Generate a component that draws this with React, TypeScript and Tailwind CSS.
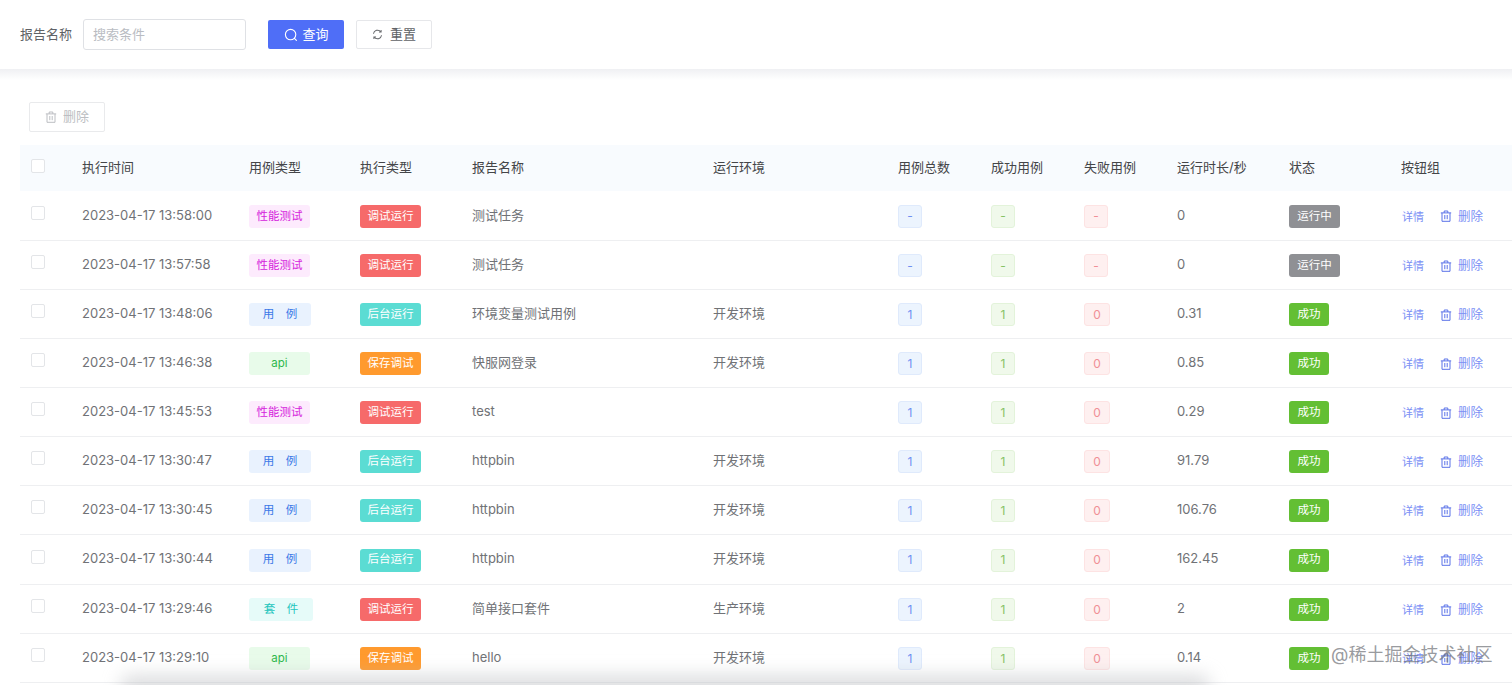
import React from 'react';

const FONT = "font-['Inter','Noto_Sans_CJK_SC',sans-serif]";

function SearchIcon() {
  return (
    <svg width="14" height="14" viewBox="0 0 14 14" fill="none" stroke="currentColor" strokeWidth="1.1">
      <circle cx="6.6" cy="6.6" r="5.2" />
      <path d="M10.4 10.4l2 2" strokeLinecap="round" />
    </svg>
  );
}

function ResetIcon() {
  return (
    <svg width="11" height="11" viewBox="0 0 12 12" fill="none" stroke="currentColor" strokeWidth="1.1">
      <path d="M1.6 5.2A4.5 4.5 0 0 1 9.6 3" />
      <path d="M10.4 6.8A4.5 4.5 0 0 1 2.4 9" />
      <path d="M9.9 1v2.3H7.6M2.1 11V8.7h2.3" />
    </svg>
  );
}

function TrashIcon({ size = 12 }: { size?: number }) {
  return (
    <svg width={size} height={size} viewBox="0 0 12 12" fill="none" stroke="currentColor" strokeWidth="1">
      <path d="M.8 2.9h10.4M4.2 2.9V1h3.6v1.9M2 2.9v8.4h8V2.9M4.8 5v4.2M7.2 5v4.2" />
    </svg>
  );
}

type Row = {
  time: string;
  kind: 'perf' | 'case' | 'api' | 'suite';
  run: 'debug' | 'bg' | 'save';
  name: string;
  env: string;
  counts: [string, string, string];
  duration: string;
  running?: boolean;
};

const kinds = {
  perf: { label: '性能测试', cls: 'w-[61px] bg-[#fdebfd] text-[#d524dc]' },
  case: { label: '用　例', cls: 'w-[62px] bg-[#e9f2fe] text-[#3b78e7]' },
  api: { label: 'api', cls: 'w-[61px] bg-[#e8fbea] text-[#2fb84d]' },
  suite: { label: '套　件', cls: 'w-[64px] bg-[#e6fbf9] text-[#1fc5bd]' },
};

const runs = {
  debug: { label: '调试运行', cls: 'bg-[#f66a6a]' },
  bg: { label: '后台运行', cls: 'bg-[#5bdcd3]' },
  save: { label: '保存调试', cls: 'bg-[#ff9a2e]' },
};

const rows: Row[] = [
  { time: '2023-04-17 13:58:00', kind: 'perf', run: 'debug', name: '测试任务', env: '', counts: ['-', '-', '-'], duration: '0', running: true },
  { time: '2023-04-17 13:57:58', kind: 'perf', run: 'debug', name: '测试任务', env: '', counts: ['-', '-', '-'], duration: '0', running: true },
  { time: '2023-04-17 13:48:06', kind: 'case', run: 'bg', name: '环境变量测试用例', env: '开发环境', counts: ['1', '1', '0'], duration: '0.31' },
  { time: '2023-04-17 13:46:38', kind: 'api', run: 'save', name: '快服网登录', env: '开发环境', counts: ['1', '1', '0'], duration: '0.85' },
  { time: '2023-04-17 13:45:53', kind: 'perf', run: 'debug', name: 'test', env: '', counts: ['1', '1', '0'], duration: '0.29' },
  { time: '2023-04-17 13:30:47', kind: 'case', run: 'bg', name: 'httpbin', env: '开发环境', counts: ['1', '1', '0'], duration: '91.79' },
  { time: '2023-04-17 13:30:45', kind: 'case', run: 'bg', name: 'httpbin', env: '开发环境', counts: ['1', '1', '0'], duration: '106.76' },
  { time: '2023-04-17 13:30:44', kind: 'case', run: 'bg', name: 'httpbin', env: '开发环境', counts: ['1', '1', '0'], duration: '162.45' },
  { time: '2023-04-17 13:29:46', kind: 'suite', run: 'debug', name: '简单接口套件', env: '生产环境', counts: ['1', '1', '0'], duration: '2' },
  { time: '2023-04-17 13:29:10', kind: 'api', run: 'save', name: 'hello', env: '开发环境', counts: ['1', '1', '0'], duration: '0.14' },
];

const headers = ['执行时间', '用例类型', '执行类型', '报告名称', '运行环境', '用例总数', '成功用例', '失败用例', '运行时长/秒', '状态', '按钮组'];

function Checkbox() {
  return <div className="mb-[5px] h-[14px] w-[14px] rounded-[2px] border border-[#e3e5e8] bg-white" />;
}

function Tag({ className, children }: { className: string; children: React.ReactNode }) {
  return (
    <span className={`mt-[2px] flex h-[23px] items-center justify-center rounded-[3px] text-[11.5px] ${className}`}>
      {children}
    </span>
  );
}

function Count({ value, className }: { value: string; className: string }) {
  return (
    <span className={`mt-[2px] flex h-[23px] items-center justify-center rounded-[3px] border text-[12px] ${value === '0' ? 'w-[26px]' : 'w-[24px]'} ${className}`}>
      {value}
    </span>
  );
}

export default function App() {
  return (
    <div className={`relative h-[685px] w-[1512px] overflow-hidden bg-white ${FONT}`}>
      <div className="flex h-[69px] items-start bg-white pl-5 pt-[19px]">
        <span className="mr-[11px] mt-[6px] text-[13px] leading-[18px] text-[#606266]">报告名称</span>
        <div className="flex h-[31px] w-[163px] items-center rounded-[3px] border border-[#dfe1e5] pl-[9px] text-[13px] text-[#b9bcc2]">
          搜索条件
        </div>
        <button className="ml-[22px] mt-px flex h-[29px] w-[76px] items-center justify-center gap-[5px] rounded-[2px] bg-[#4f6ef7] text-[13px] text-white">
          <SearchIcon />
          查询
        </button>
        <button className="ml-3 mt-px flex h-[29px] w-[76px] items-center justify-center gap-[7px] rounded-[2px] border border-[#e6e7ea] text-[13px] text-[#606266]">
          <ResetIcon />
          重置
        </button>
      </div>
      <div className="h-[11px] bg-gradient-to-b from-[#eff0f3] to-white" />

      <div className="pl-[29px] pt-[22px]">
        <button className="flex h-[30px] w-[76px] items-center justify-center gap-[6px] rounded-[2px] border border-[#e9eaec] text-[13px] text-[#bcbec2]">
          <TrashIcon />
          删除
        </button>
      </div>

      <table className="ml-5 mt-[13px] w-[1492px] table-fixed border-collapse">
        <colgroup>
          <col className="w-[50px]" />
          <col className="w-[167px]" />
          <col className="w-[111px]" />
          <col className="w-[112px]" />
          <col className="w-[241px]" />
          <col className="w-[185px]" />
          <col className="w-[93px]" />
          <col className="w-[93px]" />
          <col className="w-[93px]" />
          <col className="w-[112px]" />
          <col className="w-[112px]" />
          <col className="w-[123px]" />
        </colgroup>
        <thead>
          <tr className="h-[46px] bg-[#f8fbfe]">
            <th className="pl-[11px] text-left font-normal">
              <Checkbox />
            </th>
            {headers.map((h) => (
              <th key={h} className="px-3 text-left text-[13px] font-normal text-[#444548]">
                {h}
              </th>
            ))}
          </tr>
        </thead>
        <tbody className="text-[13px] text-[#707276]">
          {rows.map((r, i) => (
            <tr key={r.time} className={`border-b border-[#eeeff1] ${i === 7 ? 'h-[50px]' : 'h-[49px]'}`}>
              <td className="pl-[11px]">
                <Checkbox />
              </td>
              <td className="px-3">{r.time}</td>
              <td className="px-3">
                <Tag className={kinds[r.kind].cls}>{kinds[r.kind].label}</Tag>
              </td>
              <td className="px-3">
                <Tag className={`w-[61px] text-white ${runs[r.run].cls}`}>{runs[r.run].label}</Tag>
              </td>
              <td className="px-3">{r.name}</td>
              <td className="px-3">{r.env}</td>
              <td className="px-3">
                <Count value={r.counts[0]} className="border-[#dfeafc] bg-[#ecf4fe] text-[#6f8ff2]" />
              </td>
              <td className="px-3">
                <Count value={r.counts[1]} className="border-[#e3f3da] bg-[#f0f9eb] text-[#86c266]" />
              </td>
              <td className="px-3">
                <Count value={r.counts[2]} className="border-[#fde3e3] bg-[#fef0f0] text-[#f08f96]" />
              </td>
              <td className="px-3">{r.duration}</td>
              <td className="px-3">
                <Tag className={`text-white ${r.running ? 'w-[51px] bg-[#8f9094]' : 'w-[40px] bg-[#63bf34]'}`}>
                  {r.running ? '运行中' : '成功'}
                </Tag>
              </td>
              <td className="px-3">
                <div className="mt-[2px] flex items-center pl-px font-['Noto_Sans_CJK_SC',sans-serif] text-[#7b90f5]">
                  <span className="text-[11px]">详情</span>
                  <span className="ml-4 flex items-center gap-[6px] text-[12.5px]">
                    <span className="text-[#5a72e8]">
                      <TrashIcon />
                    </span>
                    删除
                  </span>
                </div>
              </td>
            </tr>
          ))}
        </tbody>
      </table>

      {/* soft shadow along the bottom edge and the site watermark */}
      <div className="pointer-events-none absolute bottom-[-12px] left-[120px] h-[22px] w-[1090px] rounded-full bg-[#b9bbc0]/50 blur-[9px]" />
      <div className="pointer-events-none absolute left-[1331px] top-[642px] text-[18px] leading-[26px] text-[#6b6e74]/70">
        @稀土掘金技术社区
      </div>
    </div>
  );
}
